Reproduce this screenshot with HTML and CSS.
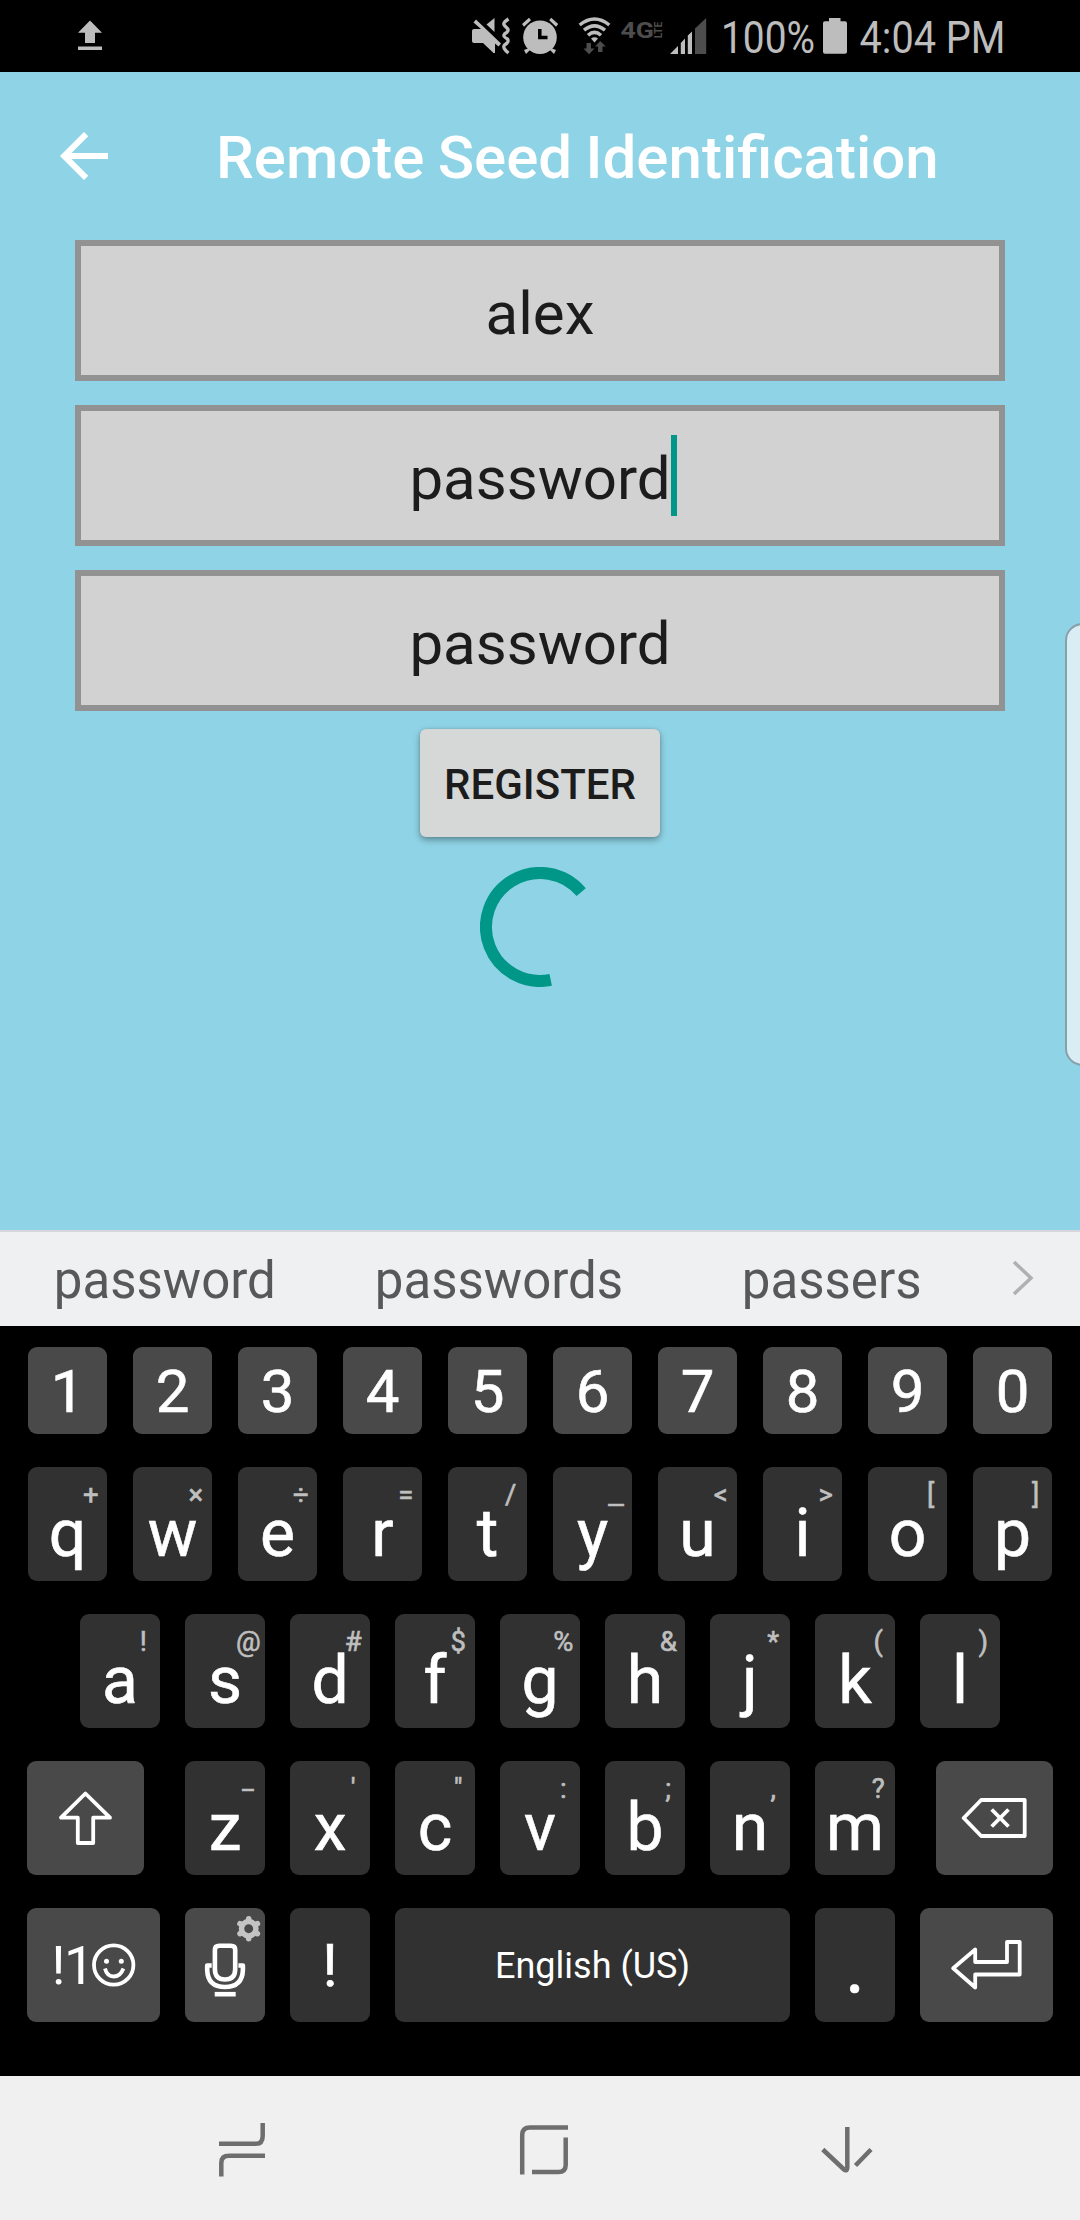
FILE: index.html
```html
<!DOCTYPE html>
<html lang="en">
<head>
<meta charset="utf-8">
<title>Remote Seed Identification</title>
<link rel="stylesheet" href="styles.css">
</head>
<body>
<div class="phone">
  <div class="status">
    <svg width="1080" height="72" viewBox="0 0 1080 72">
      <g fill="#bdbdbd">
        <path d="M90 20.5L102 32.8H95V43H85V32.8H78ZM78 46.5H102V50H78Z"/>
        <path d="M472 31q0-2 2-2H481L473.500 22.500L476 19.500L501 43.500L498.500 46.500L495 43.500V53H493.500L483 43H474q-2 0-2-2Z"/>
        <path d="M494.500 18V32L486.500 24.500Z"/>
        <circle cx="540" cy="37.200" r="16.800"/>
        <path d="M522 24L529 17.800L531 20.200L524 26.800ZM558.200 24L551.200 17.800L549.200 20.200L556 26.800ZM524 50L529 48L530 50L526 54ZM556 50L551 48L550 50L554 54Z"/>
        <path d="M591 38.500Q594.500 36 598 38.500L594.500 42.500Z"/>
        <path d="M670 54L678 46V54ZM680.800 43L685 38.500V54H680.800ZM687.800 35.500L692 31.500V54H687.800Z"/>
        <path d="M829 18H840.500V21.200H845q2 0 2 2V51.700q0 2-2 2H825q-2 0-2-2V23.200q0-2 2-2H829Z"/>
      </g>
      <path d="M508.500 19Q502 23 504.500 25.500L507.500 28.500Q509.500 31 504.500 34Q502.500 36.500 507.500 39Q509.500 42 504.500 45Q502 48 508.500 53" fill="none" stroke="#bdbdbd" stroke-width="3.300"/>
      <path d="M539.800 29V37.500H547.500" fill="none" stroke="#000" stroke-width="3.500"/>
      <g fill="none" stroke="#bdbdbd" stroke-width="3.500">
        <path d="M579.700 25Q594.500 13 609.300 25"/>
        <path d="M584 30.200Q594.500 21.500 605 30.200"/>
        <path d="M588 35.200Q594.500 29.500 601 35.200"/>
      </g>
      <g fill="#4d4d4d">
        <path d="M586.500 43H591V48.500H594.500L589 54.300L583.500 48.500H586.500Z"/>
        <path d="M600.200 41L605.700 46.500H602.500V52H598V46.500H595Z"/>
        <path d="M695 28.500L706.200 18V54H695Z"/>
      </g>
      <g class="condensed">
        <text x="620.500" y="37.700" class="net" textLength="33.500" lengthAdjust="spacingAndGlyphs">4G</text>
        <text transform="translate(661.800 38.300) rotate(-90)" class="lte" textLength="16.500" lengthAdjust="spacingAndGlyphs">LTE</text>
        <text x="721" y="52.700" textLength="94" lengthAdjust="spacingAndGlyphs">100%</text>
        <text x="859.500" y="52.700" textLength="146" lengthAdjust="spacingAndGlyphs">4:04 PM</text>
      </g>
    </svg>
  </div>

  <main class="app">
    <header class="bar">
      <svg class="back" width="72" height="72" viewBox="0 0 24 24"><path fill="#fff" d="M20 11H7.830l5.590-5.590L12 4l-8 8 8 8 1.410-1.410L7.830 13H20v-2z"/></svg>
      <h1>Remote Seed Identification</h1>
    </header>
    <div class="form">
      <div class="field">alex</div>
      <div class="field"><span class="typed">password<i class="caret"></i></span></div>
      <div class="field">password</div>
      <button class="register">REGISTER</button>
      <svg class="spinner" width="120" height="120" viewBox="-60 -60 120 120"><path d="M41.200-34.900A54 54 0 1 0 10.700 52.900" fill="none" stroke="#009788" stroke-width="12"/></svg>
    </div>
    <div class="edge"></div>
  </main>

  <div class="suggest">
    <span>password</span><span>passwords</span><span>passers</span>
    <svg width="82" height="94" viewBox="998 1232 82 94"><path d="M1014 1262L1031 1278L1014 1294" fill="none" stroke="#b0b0b1" stroke-width="3.500"/></svg>
  </div>

  <div class="keyboard">
    <div class="row digits">
      <div class="key fn">1</div><div class="key fn">2</div><div class="key fn">3</div><div class="key fn">4</div><div class="key fn">5</div><div class="key fn">6</div><div class="key fn">7</div><div class="key fn">8</div><div class="key fn">9</div><div class="key fn">0</div>
    </div>
    <div class="row">
      <div class="key">q<sup>+</sup></div><div class="key">w<sup>×</sup></div><div class="key">e<sup>÷</sup></div><div class="key">r<sup>=</sup></div><div class="key">t<sup>/</sup></div><div class="key">y<sup class="wide">_</sup></div><div class="key">u<sup>&lt;</sup></div><div class="key">i<sup>&gt;</sup></div><div class="key">o<sup>[</sup></div><div class="key">p<sup>]</sup></div>
    </div>
    <div class="row">
      <div class="key">a<sup>!</sup></div><div class="key">s<sup>@</sup></div><div class="key">d<sup>#</sup></div><div class="key">f<sup>$</sup></div><div class="key">g<sup>%</sup></div><div class="key">h<sup>&amp;</sup></div><div class="key">j<sup>*</sup></div><div class="key">k<sup>(</sup></div><div class="key">l<sup>)</sup></div>
    </div>
    <div class="row">
      <div class="key fn shift"><svg width="117" height="114" viewBox="27 1761 117 114"><path d="M85.400 1793.500L61 1817.700H77.800V1843H93.200V1817.700H110Z"/></svg></div>
      <div class="key">z<sup class="dash">-</sup></div><div class="key">x<sup>'</sup></div><div class="key">c<sup>"</sup></div><div class="key">v<sup>:</sup></div><div class="key">b<sup>;</sup></div><div class="key">n<sup>,</sup></div><div class="key">m<sup>?</sup></div>
      <div class="key fn delete"><svg width="117" height="114" viewBox="936.300 1761 117 114"><path d="M964 1818L981.500 1800H1025V1836H981.500Z"/><path d="M992 1809.500L1008.800 1826.500M1008.800 1809.500L992 1826.500"/></svg></div>
    </div>
    <div class="row">
      <div class="key fn symbols"><svg width="133" height="114" viewBox="27 1908 133 114">
        <text x="51.500" y="1984">!</text><text x="64" y="1984">1</text>
        <circle cx="113.700" cy="1965" r="19.700"/><circle class="dot" cx="106.500" cy="1961.300" r="2.500"/><circle class="dot" cx="121.300" cy="1961.300" r="2.500"/><path d="M105 1968.500Q107 1976.500 113.700 1976.500T123.400 1968.500"/></svg></div>
      <div class="key fn mic"><svg width="80" height="114" viewBox="185.300 1908 80 114">
        <path d="M219.500 1945.700H231.200q4.300 0 4.300 4V1969Q235.500 1979.500 225.300 1979.500T215.200 1969V1949.700q0-4 4.300-4Z"/>
        <path d="M212 1965.500H207.500V1970Q208 1987 225.300 1987T243.200 1970V1965.500H238.700"/>
        <path d="M215 1994.200H236"/>
        <g class="gear" transform="translate(249 1928.700)"><circle r="7.200"/><path d="M0-10V-8.500M0 8.500V10M-8.700-5L-7.400-4.200M7.400 4.200L8.700 5M-8.700 5L-7.400 4.200M7.400-4.200L8.700-5"/></g>
      </svg></div>
      <div class="key bang">!</div>
      <div class="key space">English (US)</div>
      <div class="key period">.</div>
      <div class="key fn enter"><svg width="133" height="114" viewBox="920.300 1908 133 114"><path d="M953.500 1968.300L975.500 1949.500V1962H1007.300V1942H1020V1974.500H975.500V1987.500Z"/></svg></div>
    </div>
  </div>

  <nav class="nav">
    <svg width="1080" height="144" viewBox="0 2076 1080 144">
      <g fill="none" stroke="#6e6e6e" stroke-width="4.500">
        <path d="M262.700 2123V2136Q262.700 2143.800 256 2143.800H219"/><path d="M221.300 2176.500V2163Q221.300 2155.800 229 2155.800H265"/>
        <path d="M568 2127.500H530Q522.200 2127.500 522.200 2135V2174.500"/><path d="M565.700 2137.500V2165Q565.700 2172 558.500 2172H532"/>
        <path d="M847.300 2127V2167Q847.300 2172.500 843.500 2169L822.800 2149.500M871 2149.500L855.500 2165.500"/>
      </g>
    </svg>
  </nav>
</div>
</body>
</html>
```

FILE: styles.css
```css
* { box-sizing: border-box; }
body { margin: 0; font-family: Roboto, "Liberation Sans", sans-serif; }
svg { display: block; flex: none; }

.phone { width: 1080px; height: 2220px; display: flex; flex-direction: column; overflow: hidden; background: #000; }

.status { height: 72px; background: #000; }
.condensed { fill: #bdbdbd; font-size: 45px; }
.condensed .net { fill: #4d4d4d; font-size: 22px; font-weight: 700; }
.condensed .lte { fill: #4d4d4d; font-size: 10px; font-weight: 700; }

.app { position: relative; height: 1158px; background: #8fd4e6; overflow: hidden; }
.bar { height: 168px; display: flex; align-items: center; padding-left: 48px; }
.bar h1 { margin: 4px 0 0 96px; color: #fff; font-size: 60px; line-height: 72px; font-weight: 500; white-space: nowrap; font-kerning: normal; word-spacing: -1.500px; }

.form { display: flex; flex-direction: column; align-items: center; padding: 0 75px; }
.field {
  width: 100%; height: 141px; margin-bottom: 24px; padding-top: 6px;
  display: flex; align-items: center; justify-content: center;
  border: 6px solid #929292; background: #d2d2d2; color: #1c1c1c; font-size: 60px;
}
.typed { position: relative; }
.caret { position: absolute; right: -6px; top: -8px; width: 6px; height: 81px; background: #009788; }
.register {
  width: 240px; height: 108px; margin-top: -6px; padding: 3px 0 0; border: 0; border-radius: 6px;
  background: #d6d8d7; color: #1c1c1c; font: 500 42px Roboto, sans-serif;
  box-shadow: 0 3px 7px rgba(0, 0, 0, .35), 0 0 3px rgba(0, 0, 0, .12);
}
.spinner { margin-top: 30px; }
.edge { position: absolute; right: -20px; top: 551px; width: 35px; height: 443px; border: 2px solid #87a0aa; border-radius: 20px; background: #d9edf4; }

.suggest { height: 96px; display: flex; align-items: center; border-top: 2px solid #d5d7da; background: #eff0f2; color: #585858; font-size: 51px; }
.suggest span { width: 332.700px; text-align: center; padding-top: 3px; }
.suggest span:first-child { padding-right: 3px; }

.keyboard { height: 750px; padding-top: 21px; display: flex; flex-direction: column; gap: 33px; background: #000; color: #fff; }
.row { height: 114px; display: flex; justify-content: center; gap: 25.500px; font-size: 66px; line-height: 76px; }
.digits { height: 87px; font-size: 60px; line-height: 89px; }
.key { position: relative; flex: none; width: 79.500px; height: 100%; padding-top: 29px; border-radius: 9px; background: #313131; text-align: center; -webkit-text-stroke: .6px currentColor; }
.digits .key { padding-top: 0; }
.key.fn { background: #494949; padding-top: 0; }
.key sup { position: absolute; left: 43px; top: 11px; width: 40px; color: #bfbfbf; font-size: 27.500px; line-height: 33px; }
.key .wide { transform: scaleX(1.250); }
.key .dash { transform: scaleX(1.700); }
.key svg { fill: none; stroke: #fff; stroke-width: 3.800; stroke-linejoin: round; }
.shift { width: 116.500px; margin-right: 16px; }
.delete { width: 116.500px; margin-left: 16px; }
.symbols, .enter { width: 132.500px; }
.symbols text { fill: #fff; stroke: none; font-size: 54px; -webkit-text-stroke: 0; }
.symbols .dot { fill: #fff; stroke: none; }
.mic svg { stroke-width: 4.600; }
.gear { stroke: #c4c4c4; stroke-width: 5.500; stroke-linecap: round; }
.key.bang { font-size: 60px; line-height: 115px; padding-top: 0; }
.key.space { width: 394.500px; font-size: 36px; line-height: 116px; padding-top: 0; -webkit-text-stroke: 0; }
.key.period { font-size: 78px; line-height: 117px; padding-top: 0; }

.nav { height: 144px; background: #f0f0f0; }
```
